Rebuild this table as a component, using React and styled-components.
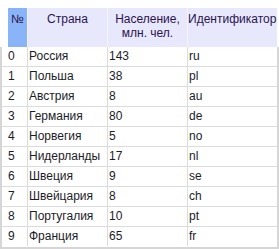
import React from 'react';
import styled, { createGlobalStyle } from 'styled-components';

const GlobalStyle = createGlobalStyle`
    html, body {
        margin: 0;
        padding: 0;
        background: #ffffff;
    }
    body {
        font-family: "Liberation Sans", Arial, sans-serif;
        font-size: 12px;
        color: #1c1c28;
    }
`

const Frame = styled.div`
    width: 279px;
    height: 249px;
    box-sizing: border-box;
    padding-top: 8px;
    overflow: hidden;
    background: #fff;
`

const Header = styled.div`
    display: grid;
    grid-template-columns: 20px 80px 80px 89px;
    margin-left: 8px;
    width: 269px;
    height: 39px;
`

const HeadCell = styled.div`
    box-sizing: border-box;
    background: ${props => props.index ? '#8ab4f8' : '#e8e8fc'};
    border-right: 1px solid ${props => props.last ? 'transparent' : '#f4f4fc'};
    padding-top: 4px;
    text-align: center;
    line-height: 14px;
    color: #2a1450;
`

const Body = styled.div`
    box-sizing: border-box;
    width: 279px;
    border: 2px solid #d6d6d6;
    border-top: none;
`

const Row = styled.div`
    display: grid;
    grid-template-columns: 26px 80px 80px 89px;
    height: 20px;
    border-bottom: 1px solid ${props => props.last ? 'transparent' : '#dcdcdc'};
    box-sizing: border-box;
`

const Cell = styled.div`
    box-sizing: border-box;
    border-right: 1px solid ${props => props.last ? 'transparent' : '#dcdcdc'};
    padding-left: ${props => props.index ? '6px' : '1px'};
    line-height: 19px;
    white-space: nowrap;
    overflow: hidden;
`

const rows = [
    ['0', 'Россия', '143', 'ru'],
    ['1', 'Польша', '38', 'pl'],
    ['2', 'Австрия', '8', 'au'],
    ['3', 'Германия', '80', 'de'],
    ['4', 'Норвегия', '5', 'no'],
    ['5', 'Нидерланды', '17', 'nl'],
    ['6', 'Швеция', '9', 'se'],
    ['7', 'Швейцария', '8', 'ch'],
    ['8', 'Португалия', '10', 'pt'],
    ['9', 'Франция', '65', 'fr'],
]

class App extends React.Component {
    render() {
        return (
            <Frame>
                <GlobalStyle />
                <Header>
                    <HeadCell index>№</HeadCell>
                    <HeadCell>Страна</HeadCell>
                    <HeadCell>Население,<br />млн. чел.</HeadCell>
                    <HeadCell last>Идентификатор</HeadCell>
                </Header>
                <Body>
                    {rows.map((r, i) => (
                        <Row key={r[0]} last={i === rows.length - 1}>
                            <Cell index>{r[0]}</Cell>
                            <Cell>{r[1]}</Cell>
                            <Cell>{r[2]}</Cell>
                            <Cell last>{r[3]}</Cell>
                        </Row>
                    ))}
                </Body>
            </Frame>
        );
    }
}

export default App;
